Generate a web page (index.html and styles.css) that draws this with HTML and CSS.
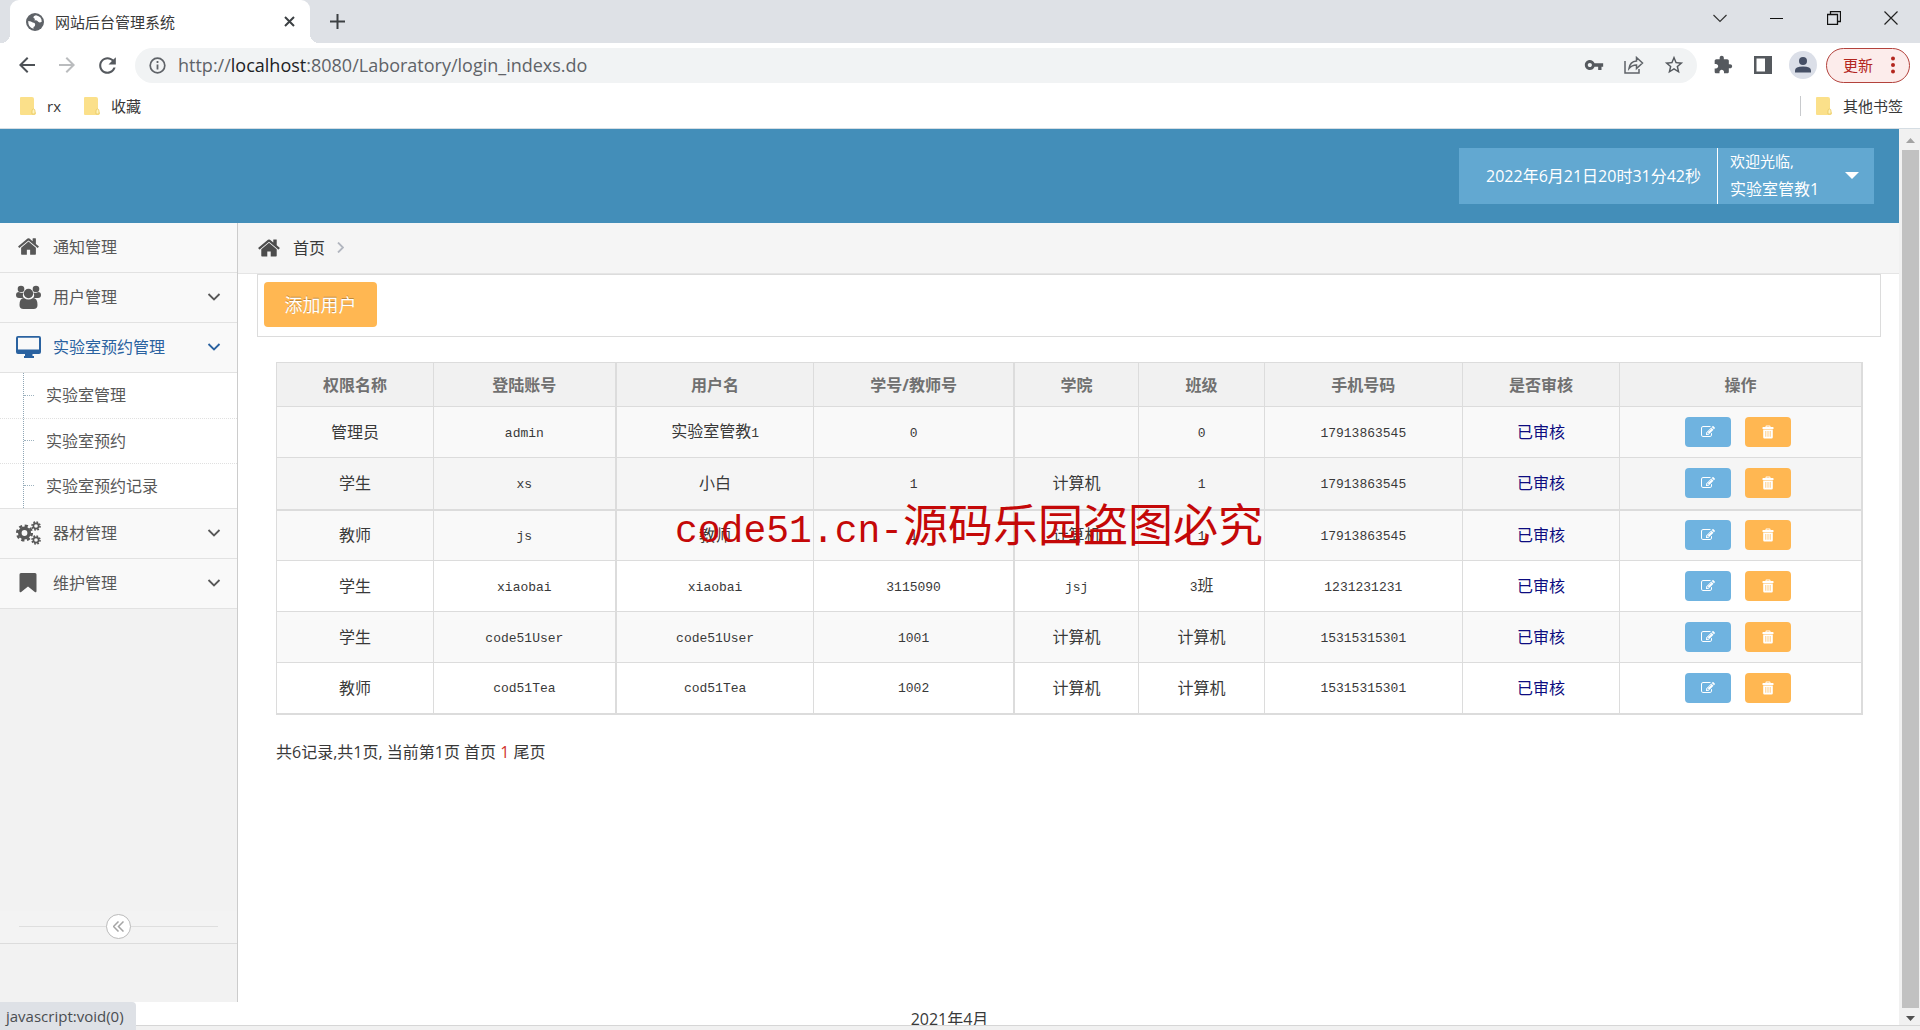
FILE: index.html
```html
<!DOCTYPE html>
<html lang="zh-CN">
<head>
<meta charset="utf-8">
<title>网站后台管理系统</title>
<link rel="stylesheet" href="styles.css">
</head>
<body>
<svg class="defs" aria-hidden="true">
  <symbol id="home" viewBox="0 0 1792 1792"><path d="M1472 992v480q0 26-19 45t-45 19h-384v-384h-256v384h-384q-26 0-45-19t-19-45v-480q0-1 .5-3t.5-3l575-474 575 474q1 2 1 6zm223-69l-62 74q-8 9-21 11h-3q-13 0-21-7l-692-577-692 577q-12 8-24 7-13-2-21-11l-62-74q-8-10-7-23.5t11-21.5l719-599q32-26 76-26t76 26l244 204v-195q0-14 9-23t23-9h192q14 0 23 9t9 23v408l219 182q10 8 11 21.5t-7 23.5z"/></symbol>
  <symbol id="edit" viewBox="0 0 1792 1792"><path d="M888 1184l116-116-152-152-116 116v56h96v96h56zm440-720q-16-16-33 1l-350 350q-17 17-1 33t33-1l350-350q17-17 1-33zm80 594v190q0 119-84.500 203.500t-203.500 84.500h-832q-119 0-203.500-84.500t-84.500-203.500v-832q0-119 84.500-203.500t203.500-84.500h832q63 0 117 25 15 7 18 23 3 17-9 29l-49 49q-14 14-32 8-23-6-45-6h-832q-66 0-113 47t-47 113v832q0 66 47 113t113 47h832q66 0 113-47t47-113v-126q0-13 9-22l64-64q15-15 35-7t20 29zm-96-738l288 288-672 672h-288v-288zm444 132l-92 92-288-288 92-92q28-28 68-28t68 28l152 152q28 28 28 68t-28 68z"/></symbol>
  <symbol id="trash" viewBox="0 0 14 14"><path fill-rule="evenodd" d="M4.500 2V1.500Q4.500.500 5.500.500h3Q9.500.500 9.500 1.500V2h2.500q.500 0 .500.500V4H1.500V2.500Q1.500 2 2 2zM5.500 2h3v-.500h-3zM2.200 4.500h9.600V12.300q0 1.200-1.200 1.200H3.400q-1.200 0-1.200-1.200zM4.500 6v5.800h.700V6zm2.150 0v5.800h.700V6zm2.150 0v5.800h.700V6z"/></symbol>
  <symbol id="down" viewBox="0 0 14 14"><path d="M1.500 4l5.500 5.500L12.500 4" fill="none" stroke="currentColor" stroke-width="1.800"/></symbol>
  <symbol id="folder" viewBox="0 0 16 18"><path d="M1 0h11q2 0 2 2v11l2 3q0 2-2 2H1q-1 0-1-1V1q0-1 1-1z" fill="#fbe08a"/><path d="M12 17v-3q0-2 1.500-2t1.500 2v3z" fill="#fff3bd" stroke="#e9c85f" stroke-width=".8"/></symbol>
</svg>

<header class="browser">
  <div class="tabstrip">
    <div class="tab">
      <svg width="18" height="18" viewBox="0 0 18 18"><circle cx="9" cy="9" r="9" fill="#5f6368"/><path d="M2.200 8q3 0 4.500 1.500 2.500 0 2.500 2T7.500 14v1.800Q2 14.500 2.200 8zM10 2.200Q7 3 7.500 5q2 .5 1 2.500 2-.5 3 .5 1.500 2.500 4.200.8Q16 3.500 10 2.200z" fill="#fff"/></svg>
      <span class="tab-title">网站后台管理系统</span>
      <button class="plain" aria-label="关闭标签页"><svg width="11" height="11" viewBox="0 0 11 11"><path d="M1 1l9 9M10 1l-9 9" stroke="#3c4043" stroke-width="2"/></svg></button>
    </div>
    <button class="plain new-tab" aria-label="新标签页"><svg width="15" height="15" viewBox="0 0 15 15"><path d="M7.500 0v15M0 7.500h15" stroke="#3c4043" stroke-width="2"/></svg></button>
    <div class="window-buttons">
      <button class="plain" aria-label="搜索标签页"><svg width="14" height="14" viewBox="0 0 14 14"><path d="M.5 4L7 10.500 13.500 4" fill="none" stroke="#333" stroke-width="1.200"/></svg></button>
      <button class="plain" aria-label="最小化"><svg width="14" height="14" viewBox="0 0 14 14"><path d="M0 7.500h13" stroke="#111"/></svg></button>
      <button class="plain" aria-label="还原"><svg width="14" height="14" viewBox="0 0 14 14"><path d="M.5 3.500h10v10H.5zM3.500 3V.5h10v10H11" fill="none" stroke="#111" stroke-width="1.300"/></svg></button>
      <button class="plain" aria-label="关闭"><svg width="14" height="14" viewBox="0 0 14 14"><path d="M.5.5l13 13M13.500.5l-13 13" stroke="#222" stroke-width="1.200"/></svg></button>
    </div>
  </div>
  <div class="toolbar">
    <button class="plain tool" aria-label="后退"><svg width="24" height="24" viewBox="0 0 24 24" fill="#4d5156"><path d="M20 11H7.830l5.590-5.590L12 4l-8 8 8 8 1.410-1.410L7.830 13H20v-2z"/></svg></button>
    <button class="plain tool" aria-label="前进"><svg width="24" height="24" viewBox="0 0 24 24" fill="#babcbe"><path d="M4 13h12.170l-5.590 5.590L12 20l8-8-8-8-1.410 1.410L16.170 11H4z"/></svg></button>
    <button class="plain tool" aria-label="重新加载"><svg width="25" height="25" viewBox="0 0 24 24" fill="#55595e"><path d="M17.650 6.350C16.200 4.900 14.210 4 12 4c-4.420 0-7.990 3.580-7.990 8s3.570 8 7.990 8c3.730 0 6.840-2.550 7.730-6h-2.080c-.82 2.330-3.040 4-5.650 4-3.310 0-6-2.690-6-6s2.690-6 6-6c1.660 0 3.140.69 4.220 1.780L13 11h7V4l-2.350 2.350z"/></svg></button>
    <div class="omnibox">
      <svg width="17" height="17" viewBox="0 0 17 17"><circle cx="8.500" cy="8.500" r="7.300" fill="none" stroke="#5f6368" stroke-width="1.700"/><path d="M8.500 7.500v5M8.500 4v2" stroke="#5f6368" stroke-width="1.800"/></svg>
      <div class="url" role="textbox" aria-label="地址栏" tabindex="0">http://<span class="host">localhost</span>:8080/Laboratory/login_indexs.do</div>
      <button class="plain tool" aria-label="密码"><svg width="20" height="20" viewBox="0 0 24 24" fill="#55595e"><path d="M12.650 10C11.830 7.670 9.610 6 7 6c-3.310 0-6 2.690-6 6s2.690 6 6 6c2.610 0 4.830-1.670 5.650-4H17v4h4v-4h2v-4H12.650zM7 14.500c-1.400 0-2.500-1.100-2.500-2.500S5.600 9.500 7 9.500 9.500 10.600 9.500 12 8.400 14.500 7 14.500z"/></svg></button>
      <button class="plain tool" aria-label="分享"><svg width="20" height="18" viewBox="0 0 20 18" fill="none" stroke="#5f6368" stroke-width="1.500"><path d="M1 5v12h14v-4M5 12.500Q6 5.500 12.500 5V1.500L18.500 7l-6 5.500V9Q8 9 5 12.500z"/></svg></button>
      <button class="plain tool" aria-label="收藏此页"><svg width="22" height="22" viewBox="0 0 24 24" fill="#55595e"><path d="M22 9.240l-7.190-.62L12 2 9.190 8.630 2 9.240l5.460 4.730L5.820 21 12 17.270 18.180 21l-1.630-7.030L22 9.240zM12 15.400l-3.760 2.270 1-4.280-3.320-2.880 4.380-.38L12 6.100l1.710 4.040 4.380.38-3.320 2.880 1 4.280L12 15.400z"/></svg></button>
    </div>
    <button class="plain tool" aria-label="扩展程序"><svg width="20" height="20" viewBox="0 0 24 24" fill="#55595e"><path d="M20.500 11H19V7c0-1.100-.9-2-2-2h-4V3.500C13 2.120 11.880 1 10.500 1S8 2.120 8 3.500V5H4c-1.100 0-1.990.9-1.990 2v3.800H3.500c1.490 0 2.700 1.210 2.700 2.700s-1.210 2.700-2.700 2.700H2V20c0 1.100.9 2 2 2h3.800v-1.500c0-1.490 1.210-2.700 2.700-2.700 1.490 0 2.700 1.210 2.700 2.700V22H17c1.100 0 2-.9 2-2v-4h1.500c1.380 0 2.500-1.120 2.500-2.500S21.880 11 20.500 11z"/></svg></button>
    <button class="plain tool" aria-label="侧边栏"><svg width="18" height="18" viewBox="0 0 18 18"><path d="M0 0h18v18H0zM2.500 2.500v13h8.500v-13z" fill="#55595e" fill-rule="evenodd"/></svg></button>
    <button class="plain tool" aria-label="个人资料"><svg width="28" height="28" viewBox="0 0 28 28"><circle cx="14" cy="14" r="14" fill="#dbdfe8"/><circle cx="14" cy="10" r="4" fill="#465066"/><path d="M6 21.500v-2q0-4 8-4t8 4v2z" fill="#465066"/></svg></button>
    <button class="update">更新<svg width="4" height="18" viewBox="0 0 4 18" fill="#b3261e"><circle cx="2" cy="2.500" r="2"/><circle cx="2" cy="9" r="2"/><circle cx="2" cy="15.500" r="2"/></svg></button>
  </div>
  <nav class="bookmarks">
    <a href="#"><svg width="16" height="18"><use href="#folder"/></svg>rx</a>
    <a href="#"><svg width="16" height="18"><use href="#folder"/></svg>收藏</a>
    <a href="#" class="other"><svg width="16" height="18"><use href="#folder"/></svg>其他书签</a>
  </nav>
</header>

<div class="viewport">
  <div class="page">
    <header class="topbar">
      <time class="clock">2022年6月21日20时31分42秒</time>
      <button class="user"><span><small>欢迎光临,</small>实验室管教1</span><svg width="14" height="7" viewBox="0 0 14 7"><path d="M0 0h14L7 7z"/></svg></button>
    </header>
    <div class="middle">
      <aside class="sidebar">
        <nav>
          <a href="#" class="item"><svg class="icon" width="23" height="23"><use href="#home"/></svg>通知管理</a>
          <a href="#" class="item"><svg class="icon" width="25" height="24" viewBox="0 0 25 24"><circle cx="5" cy="4" r="3.300"/><circle cx="20" cy="4" r="3.300"/><path d="M0 10q0-3 3-3 2 1.500 4.500.5Q6 11 8 13H3q-3 0-3-3zM25 10q0-3-3-3-2 1.500-4.500.5Q19 11 17 13h5q3 0 3-3z"/><circle cx="12.500" cy="8.500" r="4.700"/><path d="M3.500 20q0-7 4.500-7 4.500 3 9 0 4.500 0 4.500 7 0 4-4 4h-10q-4 0-4-4z"/></svg>用户管理<svg width="14" height="14"><use href="#down"/></svg></a>
          <a href="#" class="item active"><svg class="icon" width="25" height="22" viewBox="0 0 25 22"><path fill-rule="evenodd" d="M2 0h21q2 0 2 2v14q0 2-2 2h-6.500v2H18v2H8v-2h1v-2H2q-2 0-2-2V2q0-2 2-2zm0 1.700v11.800h21V1.700z"/></svg>实验室预约管理<svg width="14" height="14"><use href="#down"/></svg></a>
          <div class="submenu">
            <a href="#">实验室管理</a>
            <a href="#">实验室预约</a>
            <a href="#">实验室预约记录</a>
          </div>
          <a href="#" class="item"><svg class="icon" width="25" height="24" viewBox="0 0 25 24" fill="none" stroke="currentColor"><circle cx="8.500" cy="12" r="4.700" stroke-width="3.600"/><circle cx="8.500" cy="12" r="7.300" stroke-width="2.500" stroke-dasharray="3.200 2.530"/><circle cx="20" cy="5" r="2.600" stroke-width="1.600"/><circle cx="20" cy="5" r="4" stroke-width="1.600" stroke-dasharray="1.700 1.440"/><circle cx="20" cy="19" r="2.600" stroke-width="1.600"/><circle cx="20" cy="19" r="4" stroke-width="1.600" stroke-dasharray="1.700 1.440"/></svg>器材管理<svg width="14" height="14"><use href="#down"/></svg></a>
          <a href="#" class="item"><svg class="icon" width="18" height="20" viewBox="0 0 18 20"><path d="M2 0h14q1.500 0 1.500 1.500V18q0 2-1.700 1L9 13.500 2.200 19Q.5 20 .5 18V1.500Q.5 0 2 0z"/></svg>维护管理<svg width="14" height="14"><use href="#down"/></svg></a>
        </nav>
        <div class="collapse"><button aria-label="折叠菜单"><svg width="11" height="11" viewBox="0 0 11 11"><path d="M5.500.5l-5 5 5 5M10.500.5l-5 5 5 5" fill="none" stroke="#a5a5a5" stroke-width="1.500"/></svg></button></div>
      </aside>
      <main class="main">
        <nav class="crumbs"><svg width="24" height="24" fill="#4c4c4c"><use href="#home"/></svg><a href="#">首页</a><svg width="7" height="11" viewBox="0 0 7 11"><path d="M1 .5l5 5-5 5" fill="none" stroke="#b2b6bf" stroke-width="1.800"/></svg></nav>
        <div class="actions"><button class="add">添加用户</button></div>
        <table class="users">
          <colgroup><col class="w-m"><col class="w-l"><col class="w-xl"><col class="w-xxl"><col class="w-s"><col class="w-s"><col class="w-xl"><col class="w-m"><col></colgroup>
          <thead><tr><th>权限名称</th><th>登陆账号</th><th>用户名</th><th>学号/教师号</th><th>学院</th><th>班级</th><th>手机号码</th><th>是否审核</th><th>操作</th></tr></thead>
          <tbody>
            <tr><td>管理员</td><td><code>admin</code></td><td>实验室管教<code>1</code></td><td><code>0</code></td><td></td><td><code>0</code></td><td><code>17913863545</code></td><td class="ok">已审核</td><td><div class="ops"><button class="edit" aria-label="编辑"><svg width="14" height="14"><use href="#edit"/></svg></button><button class="del" aria-label="删除"><svg width="14" height="14"><use href="#trash"/></svg></button></div></td></tr>
            <tr class="hover"><td>学生</td><td><code>xs</code></td><td>小白</td><td><code>1</code></td><td>计算机</td><td><code>1</code></td><td><code>17913863545</code></td><td class="ok">已审核</td><td><div class="ops"><button class="edit" aria-label="编辑"><svg width="14" height="14"><use href="#edit"/></svg></button><button class="del" aria-label="删除"><svg width="14" height="14"><use href="#trash"/></svg></button></div></td></tr>
            <tr><td>教师</td><td><code>js</code></td><td>教师</td><td><code>1</code></td><td>计算机</td><td><code>1</code></td><td><code>17913863545</code></td><td class="ok">已审核</td><td><div class="ops"><button class="edit" aria-label="编辑"><svg width="14" height="14"><use href="#edit"/></svg></button><button class="del" aria-label="删除"><svg width="14" height="14"><use href="#trash"/></svg></button></div></td></tr>
            <tr><td>学生</td><td><code>xiaobai</code></td><td><code>xiaobai</code></td><td><code>3115090</code></td><td><code>jsj</code></td><td><code>3</code>班</td><td><code>1231231231</code></td><td class="ok">已审核</td><td><div class="ops"><button class="edit" aria-label="编辑"><svg width="14" height="14"><use href="#edit"/></svg></button><button class="del" aria-label="删除"><svg width="14" height="14"><use href="#trash"/></svg></button></div></td></tr>
            <tr><td>学生</td><td><code>code51User</code></td><td><code>code51User</code></td><td><code>1001</code></td><td>计算机</td><td>计算机</td><td><code>15315315301</code></td><td class="ok">已审核</td><td><div class="ops"><button class="edit" aria-label="编辑"><svg width="14" height="14"><use href="#edit"/></svg></button><button class="del" aria-label="删除"><svg width="14" height="14"><use href="#trash"/></svg></button></div></td></tr>
            <tr><td>教师</td><td><code>cod51Tea</code></td><td><code>cod51Tea</code></td><td><code>1002</code></td><td>计算机</td><td>计算机</td><td><code>15315315301</code></td><td class="ok">已审核</td><td><div class="ops"><button class="edit" aria-label="编辑"><svg width="14" height="14"><use href="#edit"/></svg></button><button class="del" aria-label="删除"><svg width="14" height="14"><use href="#trash"/></svg></button></div></td></tr>
          </tbody>
        </table>
        <p class="pager">共6记录,共1页, 当前第1页 <a href="#">首页</a> <span class="current">1</span> <a href="#">尾页</a></p>
      </main>
    </div>
    <footer class="footer">2021年4月</footer>
  </div>
  <div class="scrollbar" aria-hidden="true">
    <svg width="17" height="21" viewBox="0 0 17 21"><path d="M4 14h9l-4.500-5z" fill="#a3a3a3"/></svg>
    <div class="thumb"></div>
    <svg width="17" height="17" viewBox="0 0 17 17"><path d="M4 8h9l-4.500 5z" fill="#505050"/></svg>
  </div>
  <div class="watermark"><span>code51.cn-</span>源码乐园盗图必究</div>
</div>
<div class="edge"></div>
<div class="status">javascript:void(0)</div>
</body>
</html>
```
FILE: styles.css
```css
* { box-sizing: border-box; }

body {
  margin: 0;
  height: 100vh;
  display: flex;
  flex-direction: column;
  overflow: hidden;
  position: relative;
  background: #fff;
  color: #393939;
  fill: currentColor;
  font: 16px/24px "Open Sans", "Noto Sans CJK SC", sans-serif;
}

a { color: inherit; text-decoration: none; }
button { font: inherit; color: inherit; cursor: pointer; }
svg { flex: none; display: block; }
.defs { position: absolute; width: 0; height: 0; }

.plain {
  display: flex;
  align-items: center;
  justify-content: center;
  padding: 0;
  border: 0;
  background: none;
}

/* browser frame */
.browser { flex: none; border-bottom: 1px solid #d5dde3; }

.tabstrip {
  display: flex;
  height: 43px;
  padding: 0 1px 0 10px;
  background: #dee1e6;
}

.tab {
  position: relative;
  display: flex;
  align-items: center;
  gap: 11px;
  width: 300px;
  padding: 0 15px 0 16px;
  border-radius: 9px 9px 0 0;
  background: #fff;
  font-size: 15px;
}

/* outward curves at the foot of the active tab */
.tab::before, .tab::after {
  content: "";
  position: absolute;
  bottom: 0;
  width: 9px;
  height: 9px;
}
.tab::before { right: 100%; background: radial-gradient(circle at 0 0, transparent 9px, #fff 9px); }
.tab::after { left: 100%; background: radial-gradient(circle at 100% 0, transparent 9px, #fff 9px); }

.tab-title { flex: 1; }
.new-tab { width: 55px; }
.window-buttons { display: flex; height: 36px; margin-left: auto; }
.window-buttons button { width: 57px; }

.toolbar {
  display: flex;
  align-items: center;
  height: 44px;
  padding: 0 10px 0 7px;
}

.tool { width: 40px; height: 36px; }

.omnibox {
  flex: 1;
  display: flex;
  align-items: center;
  height: 35px;
  margin: 0 6px 0 8px;
  padding: 0 3px 0 14px;
  border-radius: 18px;
  background: #f1f3f4;
}

.url { flex: 1; padding-left: 12px; color: #5f6368; font-size: 18px; }
.host { color: #202124; }

.update {
  display: flex;
  align-items: center;
  justify-content: space-between;
  width: 84px;
  height: 35px;
  margin-left: 3px;
  padding: 0 14px 0 16px;
  border: 1px solid #b3423c;
  border-radius: 18px;
  background: #fceceb;
  color: #b3261e;
  font-size: 15px;
}

.bookmarks {
  display: flex;
  align-items: center;
  gap: 23px;
  height: 41px;
  padding: 0 17px 3px 20px;
  font-size: 15px;
}

.bookmarks a { display: flex; align-items: center; gap: 11px; height: 20px; }
.bookmarks .other { margin-left: auto; padding-left: 15px; border-left: 1px solid #c8cacd; }

/* page */
.viewport { flex: 1; min-height: 0; display: flex; position: relative; }
.page { flex: 1; min-width: 0; display: flex; flex-direction: column; }

.topbar {
  display: flex;
  justify-content: flex-end;
  padding: 19px 25px;
  background: #438eb9;
  color: #fff;
}

.clock {
  display: flex;
  align-items: center;
  padding: 0 16px 0 27px;
  border-right: 1px solid #fff;
  background: #62a8d1;
}

.user {
  display: flex;
  align-items: center;
  justify-content: space-between;
  width: 156px;
  height: 56px;
  padding: 0 15px 2px 12px;
  border: 0;
  background: #62a8d1;
  text-align: left;
  line-height: 28px;
}

.user small { display: block; font-size: 15px; }

.middle { flex: 1; min-height: 0; display: flex; }

.sidebar {
  display: flex;
  flex-direction: column;
  width: 238px;
  padding-bottom: 58px;
  border-right: 1px solid #ccc;
  background: #f2f2f2;
  color: #585858;
}

.item {
  display: grid;
  grid-template-columns: 50px 1fr 14px;
  align-items: center;
  height: 50px;
  padding: 0 16px 2px 3px;
  border-bottom: 1px solid #e2e2e2;
  background: #f9f9f9;
}

.icon { margin: 0 auto; }
.active { color: #2a62a0; }

.submenu { position: relative; background: #fff; border-bottom: 1px solid #e2e2e2; }
.submenu::before {
  content: "";
  position: absolute;
  inset: 0 auto 0 23px;
  border-left: 1px dotted #8fa6b5;
}
.submenu a { display: flex; align-items: center; height: 45px; padding-bottom: 1px; }
.submenu a + a { border-top: 1px dotted #e0e0e0; }
.submenu a::before {
  content: "";
  width: 10px;
  margin: 0 12px 0 24px;
  border-top: 1px dotted #9db2bf;
}

.collapse {
  display: grid;
  place-items: center;
  height: 33px;
  margin-top: auto;
  padding-bottom: 2px;
  border-bottom: 1px solid #dcdcdc;
  background: linear-gradient(#dedede, #dedede) center 15px / calc(100% - 38px) 1px no-repeat, #f3f3f3;
}

.collapse button {
  display: grid;
  place-items: center;
  width: 25px;
  height: 25px;
  padding: 0;
  border: 1px solid #bbb;
  border-radius: 50%;
  background: #fff;
}

.main { flex: 1; min-width: 0; }

.crumbs {
  display: flex;
  align-items: center;
  gap: 12px;
  height: 51px;
  padding: 0 19px 1px;
  border-bottom: 1px solid #e5e5e5;
  background: #f5f5f5;
}

.actions {
  margin: 0 18px 0 19px;
  padding: 7px 6px 9px;
  border: 1px solid #dcdcdc;
}

.add {
  display: block;
  width: 113px;
  height: 45px;
  padding: 0;
  border: 0;
  border-radius: 4px;
  background: #ffb752;
  color: #fff;
  font-size: 18px;
  text-shadow: 0 -1px 0 rgba(0, 0, 0, .25);
}

.users {
  width: calc(100% - 74px);
  margin: 25px 37px 0 38px;
  border: 1px solid #dcdcdc;
  border-width: 1px 2px 2px 1px;
  border-collapse: collapse;
  table-layout: fixed;
  text-align: center;
}

.users th, .users td { height: 51px; padding: 0; border: 1px solid #dcdcdc; }
.users th { height: 44px; background: #f1f1f1; color: #707070; font-weight: 700; }
.users tr > :nth-child(2), .users tr > :nth-child(4) { border-right-width: 2px; }
.users tr > :last-child { border-right-width: 2px; }
.users tbody tr:nth-child(odd) { background: #f9f9f9; }
.users .hover { background: #f5f5f5; }
.users .hover td { height: 52px; }
.users .hover td, .users tbody tr:last-child td { border-bottom-width: 2px; }
.users .ok { color: #0c0c80; }
.users code { font: 13px/24px "Liberation Mono", monospace; }

.w-s { width: 7.9%; }
.w-m { width: 9.9%; }
.w-l { width: 11.5%; }
.w-xl { width: 12.5%; }
.w-xxl { width: 12.6%; }

.ops { display: flex; justify-content: center; gap: 14px; padding-right: 4px; }
.ops button {
  display: grid;
  place-items: center;
  width: 46px;
  height: 30px;
  padding: 0;
  border: 0;
  border-radius: 4px;
  background: #6fb3e0;
  color: #fff;
}
.ops .del { background: #ffb752; }

.pager { margin: 25px 38px 0; }
.current { color: #d2322d; }

.footer {
  height: 23px;
  overflow: hidden;
  padding-top: 5px;
  text-align: center;
}

.scrollbar {
  display: flex;
  flex-direction: column;
  align-items: center;
  width: 21px;
  padding-left: 1px;
  background: #f1f1f1;
}

.thumb { flex: 1; width: 17px; background: #c1c1c1; }

.watermark {
  position: absolute;
  top: 366px;
  left: 675px;
  color: #c40808;
  font-size: 45px;
  line-height: 60px;
  white-space: nowrap;
  pointer-events: none;
}

.watermark span { font-family: "Liberation Mono", monospace; font-size: 38px; }

.edge { flex: none; height: 5px; border-top: 1px solid #d6d6d6; background: #f1f1f1; }

.status {
  position: absolute;
  left: 0;
  bottom: 0;
  height: 28px;
  padding: 2px 12px 0 6px;
  border-top-right-radius: 4px;
  background: #dee1e6;
  color: #4a4d51;
  font-size: 15px;
}
```
